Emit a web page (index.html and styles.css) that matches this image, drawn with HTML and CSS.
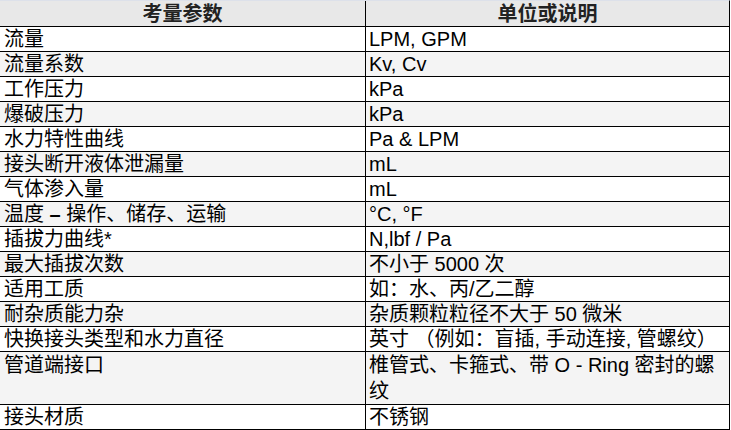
FILE: index.html
```html
<!DOCTYPE html>
<html lang="zh-CN">
<head>
<meta charset="utf-8">
<title>考量参数</title>
<link rel="stylesheet" href="styles.css">
</head>
<body>
<table class="spec">
  <thead>
    <tr>
      <th class="c1">考量参数</th>
      <th class="c2">单位或说明</th>
    </tr>
  </thead>
  <tbody>
    <tr><td class="c1">流量</td><td class="c2">LPM, GPM</td></tr>
    <tr><td class="c1">流量系数</td><td class="c2">Kv, Cv</td></tr>
    <tr><td class="c1">工作压力</td><td class="c2">kPa</td></tr>
    <tr><td class="c1">爆破压力</td><td class="c2">kPa</td></tr>
    <tr><td class="c1">水力特性曲线</td><td class="c2">Pa &amp; LPM</td></tr>
    <tr><td class="c1">接头断开液体泄漏量</td><td class="c2">mL</td></tr>
    <tr><td class="c1">气体渗入量</td><td class="c2">mL</td></tr>
    <tr><td class="c1">温度 <b class="dash">–</b> 操作、储存、运输</td><td class="c2">°C, °F</td></tr>
    <tr><td class="c1">插拔力曲线*</td><td class="c2">N,lbf / Pa</td></tr>
    <tr><td class="c1">最大插拔次数</td><td class="c2">不小于 5000 次</td></tr>
    <tr><td class="c1">适用工质</td><td class="c2">如：水、丙/乙二醇</td></tr>
    <tr><td class="c1">耐杂质能力杂</td><td class="c2">杂质颗粒粒径不大于 50 微米</td></tr>
    <tr><td class="c1">快换接头类型和水力直径</td><td class="c2">英寸 （例如：盲插, 手动连接, 管螺纹）</td></tr>
    <tr class="tall"><td class="c1">管道端接口</td><td class="c2">椎管式、卡箍式、带 O - Ring 密封的螺纹</td></tr>
    <tr><td class="c1">接头材质</td><td class="c2">不锈钢</td></tr>
  </tbody>
</table>
</body>
</html>
```
FILE: styles.css
```css
html, body {
  margin: 0;
  padding: 0;
  background: #ffffff;
}

body {
  font-family: "Liberation Sans", "Noto Sans CJK SC", sans-serif;
  font-size: 20px;
  color: #000000;
}

.spec {
  box-sizing: border-box;
  width: 730px;
  table-layout: fixed;
  border-collapse: separate;
  border-spacing: 0;
  border-top: 1px solid #dde1ea;
  border-right: 1px solid #000000;
}

.spec th,
.spec td {
  box-sizing: border-box;
  border-bottom: 1px solid #000000;
  vertical-align: top;
  white-space: normal;
  overflow: hidden;
}

.spec th {
  height: 26px;
  padding: 1px 0 0;
  line-height: 24px;
  font-weight: bold;
  text-align: center;
  background: #e8e8e8;
  color: #222222;
}

.spec td {
  height: 25px;
  line-height: 24px;
  padding: 0 4px;
  text-align: left;
}

.spec .c1 {
  width: 366px;
  border-right: 1px solid #000000;
}

.spec td.c1 {
  padding-left: 4px;
}

.spec td.c2 {
  padding-left: 3px;
  padding-right: 4px;
}

.spec tbody tr:nth-child(even) td {
  background: #f4f4f4;
}

.spec tr.tall td {
  height: 53px;
  line-height: 26px;
}

.dash {
  font-weight: bold;
}
```
